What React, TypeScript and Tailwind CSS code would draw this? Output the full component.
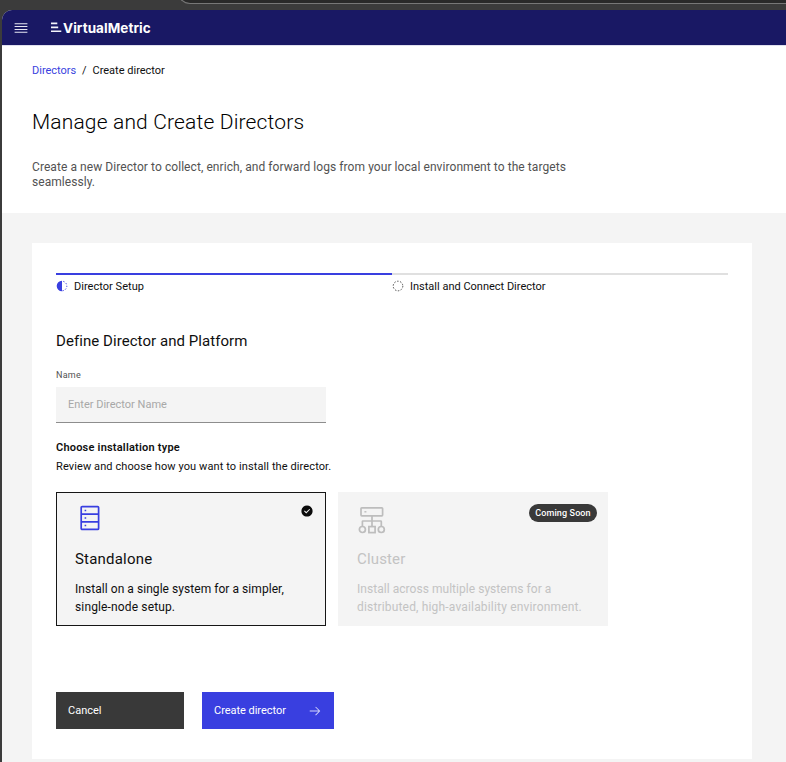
import type { ReactNode } from "react";

function MenuIcon() {
  return (
    <svg className="h-4 w-4" viewBox="0 0 20 20" fill="#e6e6f2">
      <path d="M2 14.8H18V16H2zM2 11.2H18V12.4H2zM2 7.6H18V8.8H2zM2 4H18V5.2H2z" />
    </svg>
  );
}

function LogoMark() {
  return (
    <svg className="h-[11px] w-[11px]" viewBox="0 0 11 11" fill="#f4f4fa">
      <path d="M0 0.6H6.3V2.3H0zM0 4.5H7.2V6.2H0zM0 8.4H10.3V10.1H0z" />
    </svg>
  );
}

function HalfCircleIcon() {
  return (
    <svg className="h-3 w-3" viewBox="0 0 12 12">
      <path d="M6 .7A5.3 5.3 0 0 0 6 11.3z" fill="#393fe0" />
      <path d="M6 1.2A4.8 4.8 0 0 1 6 10.8" fill="none" stroke="#393fe0" strokeWidth="1" strokeDasharray="1.3 1.6" strokeDashoffset="-1.3" />
    </svg>
  );
}

function DashedCircleIcon() {
  return (
    <svg className="h-3 w-3" viewBox="0 0 12 12">
      <circle cx="6" cy="6" r="4.8" fill="none" stroke="#393939" strokeWidth="0.9" strokeDasharray="1.5 1.516" />
    </svg>
  );
}

function ServerIcon() {
  return (
    <svg className="h-[27px] w-[22px]" viewBox="0 0 22 27" fill="none" stroke="#393fe0" strokeWidth="1.7">
      <rect x="2.2" y="1.6" width="17.4" height="22.8" rx="1" />
      <path d="M2.2 9.2H19.6M2.2 16.8H19.6" />
      <path d="M5.6 5.5H7.2M5.6 13H7.2M5.6 20.5H7.2" />
    </svg>
  );
}

function ClusterIcon() {
  return (
    <svg className="h-[28px] w-[28px]" viewBox="0 0 28 28" fill="none" stroke="#bdbdbd" strokeWidth="1.7">
      <rect x="3" y="1.8" width="21.6" height="8" rx="0.8" />
      <path d="M6.4 5.8H8.4" strokeWidth="1.4" />
      <path d="M14 9.8V20.6M4.4 20.3V15.6Q4.4 15 5 15H22.6Q23.3 15 23.3 15.6V20.3" />
      <circle cx="4.4" cy="23.5" r="3" />
      <circle cx="23.3" cy="23.5" r="3" />
      <rect x="10.9" y="20.6" width="6.2" height="6" />
    </svg>
  );
}

function CheckIcon() {
  return (
    <svg className="h-3 w-3" viewBox="0.5 0.5 15 15" fill="#0b0b0b">
      <path d="M8 1C4.1 1 1 4.1 1 8c0 3.9 3.1 7 7 7s7-3.1 7-7C15 4.1 11.9 1 8 1zM7 11L4.3 8.3l.9-.8L7 9.3l4-3.9.9.8L7 11z" />
    </svg>
  );
}

function ArrowIcon() {
  return (
    <svg className="h-[14px] w-[14px]" viewBox="0 0 32 32" fill="#d4d6fa">
      <path d="M18 6 16.57 7.393 24.15 15 4 15 4 17 24.15 17 16.57 24.573 18 26 28 16 18 6z" />
    </svg>
  );
}

function Step({ icon, label, active }: { icon: ReactNode; label: ReactNode; active?: boolean }) {
  return (
    <li className={`flex flex-1 items-start gap-1.5 border-t-2 pt-[5px] ${active ? "border-[#393fe0]" : "border-[#e0e0e0]"}`}>
      {icon}
      {label}
    </li>
  );
}

export default function App() {
  return (
    <div className="h-[762px] overflow-hidden bg-[#3b3b3b] font-['Roboto','Liberation_Sans',sans-serif] text-[11px] leading-[14px] whitespace-nowrap text-[#0f0f0f]">
      <div className="flex h-2.5 justify-end overflow-hidden">
        <div className="-mt-3 h-4 w-[608px] rounded-bl-[12px] border-b border-l border-[#777] bg-[#292929]" />
      </div>
      <div className="ml-0.5 h-[752px] overflow-hidden rounded-tl-[10px] bg-[#f4f4f4]">
        <header className="flex h-[35px] items-center bg-[#191864] pl-[10.5px]">
          <MenuIcon />
          <div className="ml-[22.5px] flex items-center gap-px text-white">
            <LogoMark />
            <span className="font-['Inter',sans-serif] text-[13.5px] font-bold tracking-[0.05px]">VirtualMetric</span>
          </div>
        </header>
        <section className="h-[168px] border-t border-[#e0e0ee] bg-white pt-[18px] pl-[30px]">
          <nav className="flex">
            <a className="w-[50px] text-[#393fe0]">Directors</a>
            <span className="w-[10.5px]">/</span>
            <span>Create director</span>
          </nav>
          <h1 className="mt-[31px] text-[21px] leading-[27px] font-light tracking-[0.16px] text-black">Manage and Create Directors</h1>
          <p className="mt-[24px] text-[12px] leading-[15px] text-[#525252]">
            <span className="block tracking-[0.07px]">Create a new Director to collect, enrich, and forward logs from your local environment to the targets</span>
            <span className="block tracking-[0.05px]">seamlessly.</span>
          </p>
        </section>
        <main className="mt-[30px] ml-[30px] h-[516px] w-[720px] bg-white px-6 pt-[30px]">
          <ol className="flex h-[60px]">
            <Step active icon={<HalfCircleIcon />} label={<span className="tracking-[0.03px]">Director Setup</span>} />
            <Step icon={<DashedCircleIcon />} label={<span>Install and Connect Director</span>} />
          </ol>
          <h2 className="text-[15px] leading-[16px] tracking-[0.06px]">Define Director and Platform</h2>
          <label className="mt-[20px] block text-[9px] leading-[12px] tracking-[0.25px] text-[#525252]">Name</label>
          <input
            className="mt-[6px] block h-9 w-[270px] border-b border-[#8d8d8d] bg-[#f4f4f4] px-3 text-[11px] placeholder:text-[#a8a8a8]"
            placeholder="Enter Director Name"
          />
          <h3 className="mt-[18px] font-semibold tracking-[0.21px]">Choose installation type</h3>
          <p className="mt-[5px] tracking-[0.1px]">Review and choose how you want to install the director.</p>
          <div className="mt-[18px] flex gap-3">
            <article className="flex h-[134px] w-[270px] flex-col border border-[#161616] bg-[#f4f4f4] pt-3 pr-[12px] pl-[18px]">
              <div className="flex h-[46px] items-start justify-between pl-1">
                <ServerIcon />
                <CheckIcon />
              </div>
              <h4 className="text-[15px] leading-[16px] tracking-[0.2px]">Standalone</h4>
              <p className="mt-[13px] text-[12px] leading-[18px]">
                <span className="block tracking-[0.05px]">Install on a single system for a simpler,</span>
                <span className="block tracking-[0.14px]">single-node setup.</span>
              </p>
            </article>
            <article className="flex h-[134px] w-[270px] flex-col bg-[#f4f4f4] pt-3 pr-[11px] pl-[19px] text-[#c3c3c3]">
              <div className="flex h-[47px] items-start justify-between pt-0.5 pl-px">
                <ClusterIcon />
                <span className="-mt-0.5 flex h-[18px] w-[68px] items-center justify-center rounded-full bg-[#393939] text-[9px] font-medium tracking-[0.12px] text-white">Coming Soon</span>
              </div>
              <h4 className="text-[15px] leading-[16px] tracking-[0.15px]">Cluster</h4>
              <p className="mt-[13px] text-[12px] leading-[18px]">
                <span className="block tracking-[0.04px]">Install across multiple systems for a</span>
                <span className="block tracking-[0.17px]">distributed, high-availability environment.</span>
              </p>
            </article>
          </div>
          <div className="mt-[66px] flex gap-[18px] text-white">
            <button className="h-[37px] w-32 bg-[#393939] px-3 text-left">Cancel</button>
            <button className="flex h-[37px] w-[132px] items-center justify-between bg-[#393fe0] px-3">
              <span className="tracking-[-0.03px]">Create director</span>
              <ArrowIcon />
            </button>
          </div>
        </main>
      </div>
    </div>
  );
}
